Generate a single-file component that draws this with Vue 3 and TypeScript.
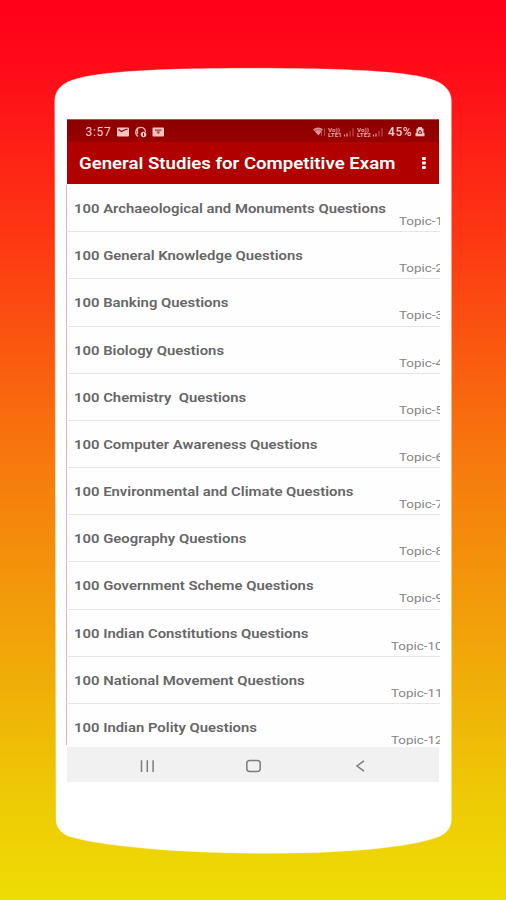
<script setup lang="ts">
interface Topic {
  id: number
  title: string
}

const titles: string[] = [
  '100 Archaeological and Monuments Questions',
  '100 General Knowledge Questions',
  '100 Banking Questions',
  '100 Biology Questions',
  '100 Chemistry  Questions',
  '100 Computer Awareness Questions',
  '100 Environmental and Climate Questions',
  '100 Geography Questions',
  '100 Government Scheme Questions',
  '100 Indian Constitutions Questions',
  '100 National Movement Questions',
  '100 Indian Polity Questions',
]

const topics: Topic[] = titles.map((title, i) => ({ id: i + 1, title }))
</script>

<template>
  <main class="stage">
    <svg class="phone-shape" width="506" height="900" viewBox="0 0 506 900" aria-hidden="true">
      <path
        d="M54.800 101C54.800 94 58 87.500 66 83C82 74 130 68.300 253 68.300C376 68.300 422 74 438 82C447 86.500 451.300 93 451.300 101V819C451.300 826 448 833 438 837C410 847 350 853.300 265 853.300C180 853.300 100 846 68 836C60 832.500 56 826 56 819Z"
        fill="#fff"
        stroke="#fff"
        stroke-opacity=".35"
      />
    </svg>

    <section class="screen">
      <header class="top">
        <div class="status">
          <span class="time">3:57</span>
          <svg class="left-icons" width="48" height="12" viewBox="0 0 48 12">
            <rect x="0" y="1.500" width="12" height="9" rx="1" fill="#f3c4c4" />
            <path d="M1.500 3.500l3 2 3-1.500 3-1" stroke="#930000" stroke-width="1.300" fill="none" />
            <path d="M21 10.500C17.500 8.500 18 2 23 1.500c4-.3 5.500 2 5.500 4.500M20.500 3v5" stroke="#e8acac" stroke-width="1.300" fill="none" />
            <circle cx="26.500" cy="8.500" r="2.800" fill="#f3c4c4" />
            <path d="M26.500 7v3" stroke="#930000" />
            <rect x="35.500" y="1.500" width="11.500" height="9" rx="1" fill="#f3c4c4" />
            <path d="M38 4.200h6.500M39.500 6h3.500M41.200 6v2" stroke="#a33" stroke-width="1.200" />
          </svg>
          <span class="spacer"></span>
          <svg class="signal" width="72" height="12" viewBox="0 0 72 12">
            <path d="M0 3.500Q5.500-.5 10 3.500L5.500 9.500Z" fill="#dc9494" />
            <path d="M1.500 4.800Q5.500 2 9 4.800M8.500 10V4M11.500 10V2.500" stroke="#b94a4a" fill="none" />
            <g class="volte">
              <text x="15" y="5.800" textLength="12" lengthAdjust="spacingAndGlyphs">Vo))</text>
              <text x="15" y="10.800" textLength="14" lengthAdjust="spacingAndGlyphs">LTE1</text>
              <text x="44" y="5.800" textLength="12" lengthAdjust="spacingAndGlyphs">Vo))</text>
              <text x="44" y="10.800" textLength="14" lengthAdjust="spacingAndGlyphs">LTE2</text>
            </g>
            <path d="M31.500 8.500v2M34 7.500v3M60.500 8.500v2M63 7.500v3" stroke="#df9a9a" stroke-width="1.300" />
            <path d="M37 5v5.500M40 2v8.500M66 5v5.500M69 2v8.500" stroke="#b64646" stroke-width="1.300" />
          </svg>
          <span class="battery">45%</span>
          <svg class="battery-icon" width="10" height="11" viewBox="0 0 10 11">
            <path d="M3 1h4v1.500h1.500V7H9.500V10.200H.5V7H1.500V2.500H3Z" fill="#f2c5c5" />
            <path d="M3 7.200L5 4l2 3.200Z" stroke="#8d1010" fill="none" />
          </svg>
        </div>
        <div class="bar">
          <h1>General Studies for Competitive Exam</h1>
          <svg width="6" height="14" viewBox="0 0 6 14" fill="#fff">
            <rect x="1" y="1" width="3.800" height="3" rx=".8" />
            <rect x="1" y="5.500" width="3.800" height="3" rx=".8" />
            <rect x="1" y="10" width="3.800" height="3" rx=".8" />
          </svg>
        </div>
      </header>

      <ul class="list">
        <li v-for="topic in topics" :key="topic.id" class="row">
          <span class="title">{{ topic.title }}</span>
          <span class="tag" :class="{ wide: topic.id > 9 }">Topic-{{ topic.id }}</span>
        </li>
      </ul>

      <nav class="nav">
        <svg width="372" height="35" viewBox="0 0 372 35" fill="none" stroke="#7c7c7c">
          <path d="M74.500 13.200v11.800M80.300 13.200v11.800M86.100 13.200v11.800" stroke-width="1.500" />
          <rect x="179.800" y="13.500" width="13.400" height="11" rx="3" stroke-width="1.500" />
          <path d="M297 13.800L290 19l7 5.200" stroke-width="1.500" />
        </svg>
      </nav>
    </section>
  </main>
</template>

<style>
body {
  margin: 0;
}
</style>

<style scoped>
.stage {
  width: 506px;
  height: 900px;
  display: grid;
  overflow: hidden;
  background: linear-gradient(#ff0018 0, #ff0919 60px, #fd3b12 250px, #f7790d 460px, #f1a609 650px, #eeca05 800px, #eedc05 900px);
  font-family: Roboto, "Liberation Sans", sans-serif;
}
.phone-shape,
.screen {
  grid-area: 1 / 1;
}
.screen {
  width: 374px;
  height: 663px;
  margin: 119px 0 0 66px;
  display: flex;
  flex-direction: column;
}
.top {
  height: 65.300px;
  flex: none;
  width: 372px;
  box-sizing: border-box;
  margin-left: 1px;
  background: #b00000;
  border-top: 1px solid #c04c4c;
}
.status {
  height: 22px;
  display: flex;
  align-items: center;
  padding: 1px 14px 0 18.500px;
  box-sizing: border-box;
  background: linear-gradient(#8c0000, #980000);
  color: #f5cdcd;
  font-size: 12px;
}
.time {
  width: 31.500px;
  letter-spacing: 0.7px;
}
.spacer {
  flex: 1;
}
.signal {
  margin-right: 3px;
}
.volte text {
  font-size: 5.500px;
  font-weight: 700;
  fill: #e3a2a2;
}
.battery {
  width: 27px;
  letter-spacing: 0.6px;
  font-weight: 500;
}
.bar {
  height: 42.300px;
  display: flex;
  align-items: center;
  justify-content: space-between;
  padding: 0 12px 0 12px;
}
h1 {
  margin: 0;
  width: 300px;
  color: #fff;
  font-size: 16px;
  font-weight: 600;
  white-space: nowrap;
  transform: scaleX(1.163);
  transform-origin: left;
}
.list {
  height: 560.700px;
  flex: none;
  box-sizing: border-box;
  margin: 0;
  padding: 0.700px 0 0;
  list-style: none;
  overflow: hidden;
  background: #fefefe;
}
.row {
  height: 47.180px;
  box-sizing: border-box;
  display: grid;
  border-left: 1.500px solid #e7aeb4;
  border-bottom: 1.500px solid #e6e6e6;
  padding-left: 7px;
}
.title {
  grid-area: 1 / 1;
  margin-top: 16px;
  line-height: 16px;
  color: #666;
  font-size: 13px;
  font-weight: 600;
  white-space: pre;
  transform: scaleX(1.143);
  transform-origin: left;
}
.tag {
  grid-area: 1 / 1;
  justify-self: start;
  margin: 30px 0 0 324.500px;
  line-height: 14px;
  color: #858585;
  font-size: 11px;
  transform: scaleX(1.22);
  transform-origin: left;
  white-space: nowrap;
}
.tag.wide {
  margin-left: 317px;
}
.nav {
  height: 35px;
  width: 372px;
  margin: 2px 0 0 1px;
  background: #f1f1f1;
}
.nav svg {
  display: block;
}
</style>
